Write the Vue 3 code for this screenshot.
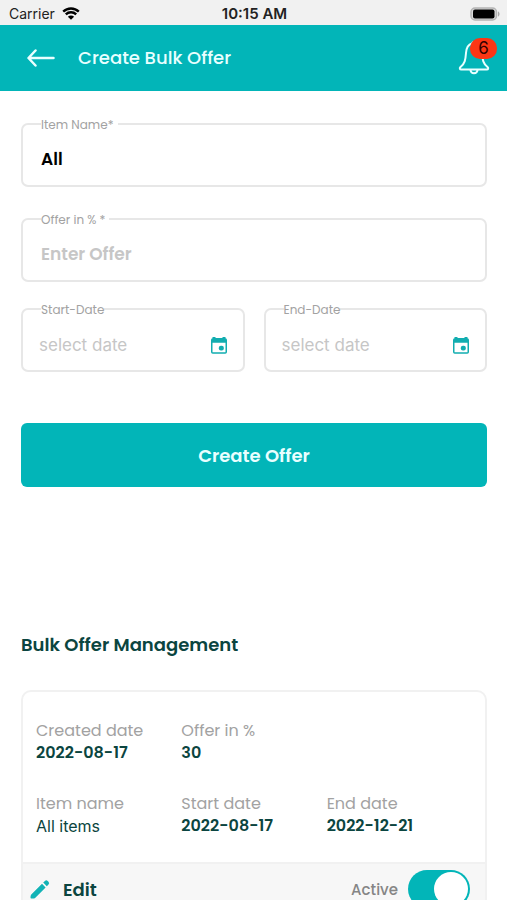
<template>
  <div class="screen">
    <div class="status-bar">
      <div class="carrier">
        <span>Carrier</span>
        <svg class="wifi" viewBox="0 0 18 13" aria-hidden="true">
          <path d="M1.2 4.6a11.2 11.2 0 0 1 15.6 0" />
          <path d="M3.8 7.3a7.5 7.5 0 0 1 10.4 0" />
          <path class="dot" d="M9 12.8 5.9 9.7a4.4 4.4 0 0 1 6.2 0z" />
        </svg>
      </div>
      <span class="clock">10:15 AM</span>
      <svg class="battery" viewBox="0 0 30 14" aria-hidden="true">
        <rect x="1" y="1" width="25.5" height="12" rx="4" fill="#d9d9d9" stroke="#b4b4b4" stroke-width="1.5" />
        <rect x="3" y="2.5" width="21.5" height="9" rx="2" fill="#000" />
        <path d="M28 4.5c2 .6 2 4.4 0 5z" fill="#a9a9a9" />
      </svg>
    </div>

    <header class="header">
      <button class="icon-btn" type="button" aria-label="Back">
        <svg class="back" viewBox="0 0 28 20">
          <path d="M26.5 10H1.8M8.5 2.5 1.5 10l7 7.500" />
        </svg>
      </button>
      <h1 class="header-title">Create Bulk Offer</h1>
      <button class="icon-btn bell-btn" type="button" aria-label="Notifications">
        <svg class="bell" viewBox="0 0 32 34">
          <path d="M14 2.5c-4.5 1.2-5.7 5-6 9.5-.5 7-1.2 10.500-5.5 14-1.2 1.200-.8 2.600.8 2.600h25.400c1.600 0 2-1.400.8-2.600-4.300-3.500-5-7-5.500-14-.3-4.500-1.500-8.300-6-9.500-.6-2-3.400-2-4 0z" />
          <path d="M12.500 29c.3 4.300 6.700 4.300 7 0" />
        </svg>
        <span class="badge">{{ notifications }}</span>
      </button>
    </header>

    <main class="content">
      <form class="form" @submit.prevent>
        <div class="field">
          <label for="item-name">Item Name*</label>
          <input id="item-name" v-model="itemName" type="text" />
        </div>
        <div class="field">
          <label for="offer">Offer in % *</label>
          <input id="offer" v-model="offer" type="text" placeholder="Enter Offer" />
        </div>
        <div class="date-row">
          <div v-for="date in dates" :key="date.id" class="field date-field">
            <label :for="date.id">{{ date.label }}</label>
            <input :id="date.id" v-model="date.value" type="text" placeholder="select date" />
            <button class="icon-btn" type="button" :aria-label="date.label">
              <svg class="calendar" viewBox="0 0 16 17">
                <path fill-rule="evenodd" d="M1.500 0h3v1h7V0h3v1.200A1.800 1.800 0 0 1 16 3v12a1.800 1.800 0 0 1-1.800 1.800H1.800A1.800 1.800 0 0 1 0 15V3a1.800 1.800 0 0 1 1.500-1.800zM1.500 5.800V15.200h13V5.800z" />
                <rect x="7.800" y="8.800" width="5" height="4.800" rx="2" />
              </svg>
            </button>
          </div>
        </div>
        <button class="submit-btn" type="submit">Create Offer</button>
      </form>

      <h2 class="section-title">Bulk Offer Management</h2>

      <section class="card">
        <dl class="details">
          <div v-for="item in details" :key="item.label" :class="['detail', { wide: item.wide }]">
            <dt>{{ item.label }}</dt>
            <dd :class="{ plain: item.plain }">{{ item.value }}</dd>
          </div>
        </dl>
        <div class="card-footer">
          <button class="edit-btn" type="button">
            <svg class="pencil" viewBox="0 0 20 20">
              <path d="M1.5 15.3 12 4.8l3.600 3.600L5.100 18.900c-1 .9-4.600.9-4.600-.2 0-1.200 0-2.400 1-3.400zM13.200 3.600l1.700-1.700a2 2 0 0 1 2.800 0l.8.8a2 2 0 0 1 0 2.800l-1.700 1.700z" />
            </svg>
            Edit
          </button>
          <label class="toggle">
            <span>Active</span>
            <input v-model="active" type="checkbox" role="switch" />
          </label>
        </div>
      </section>
    </main>
  </div>
</template>

<script setup>
import { ref } from 'vue'

const notifications = ref(6)
const itemName = ref('All')
const offer = ref('')
const active = ref(true)

const dates = ref([
  { id: 'start-date', label: 'Start-Date', value: '' },
  { id: 'end-date', label: 'End-Date', value: '' }
])

const details = [
  { label: 'Created date', value: '2022-08-17' },
  { label: 'Offer in %', value: '30', wide: true },
  { label: 'Item name', value: 'All items', plain: true },
  { label: 'Start date', value: '2022-08-17' },
  { label: 'End date', value: '2022-12-21' }
]
</script>

<style>
body {
  margin: 0;
  background: #fff;
}
</style>

<style scoped>
.screen {
  min-height: 100vh;
  font-family: Poppins, Inter, "Liberation Sans", sans-serif;
  color: #0b4540;
}

.screen * {
  box-sizing: border-box;
}

button,
input {
  font-family: inherit;
  margin: 0;
}

button {
  cursor: pointer;
}

.status-bar {
  display: grid;
  grid-template-columns: 1fr auto 1fr;
  align-items: center;
  height: 25px;
  padding: 2px 7px 0 9px;
  background: #f1f1f1;
  color: #222;
  font-family: Inter, sans-serif;
  font-size: 14px;
}

.carrier {
  display: flex;
  align-items: center;
  gap: 7px;
}

.wifi {
  width: 18px;
  height: 13px;
  fill: none;
  stroke: #000;
  stroke-width: 2.4;
}

.wifi .dot {
  fill: #000;
  stroke: none;
}

.clock {
  font-size: 15px;
  font-weight: 600;
}

.battery {
  width: 30px;
  height: 14px;
  justify-self: end;
}

.header {
  display: flex;
  align-items: center;
  height: 66px;
  padding: 0 16px 0 27px;
  background: #02b5b8;
}

.header-title {
  flex: 1;
  margin: 0 0 0 23px;
  color: #e9ffff;
  font-size: 18px;
  font-weight: 500;
  line-height: 24px;
}

.icon-btn {
  display: flex;
  padding: 0;
  border: 0;
  background: none;
}

.back {
  width: 28px;
  height: 20px;
  fill: none;
  stroke: #e9ffff;
  stroke-width: 2.5;
  stroke-linecap: round;
  stroke-linejoin: round;
}

.bell-btn {
  position: relative;
}

.bell {
  width: 34px;
  height: 34px;
  fill: none;
  stroke: #e9ffff;
  stroke-width: 2;
}

.badge {
  position: absolute;
  top: -3px;
  right: -6px;
  width: 27px;
  height: 21px;
  border-radius: 10px;
  background: #fc3615;
  color: #300;
  font-family: Inter, sans-serif;
  font-size: 17px;
  line-height: 21px;
  text-align: center;
}

.content {
  padding: 32px 20px 32px 21px;
}

.form {
  display: flex;
  flex-direction: column;
}

.field {
  position: relative;
  display: flex;
  align-items: center;
  height: 64px;
  margin-bottom: 31px;
  padding: 8px 18px 0;
  border: 2px solid #e7e7e7;
  border-radius: 7px;
}

.field label {
  position: absolute;
  top: -8px;
  left: 18px;
  padding-right: 4px;
  background: #fff;
  color: #a2a2a2;
  font-size: 12px;
  line-height: 16px;
}

.field input {
  flex: 1;
  width: 100%;
  min-width: 0;
  padding: 0;
  border: 0;
  outline: 0;
  background: none;
  color: #000;
  font-size: 17px;
  font-weight: 600;
  line-height: 24px;
}

.field input::placeholder {
  color: #c6c6c6;
  opacity: 1;
}

.date-row {
  display: grid;
  grid-template-columns: 1fr 1fr;
  gap: 19px;
  margin-top: -5px;
}

.date-row .date-field {
  margin-bottom: 51px;
  padding: 10px 16px 0;
}

.date-row .date-field label {
  padding-right: 0;
}

.date-row .date-field input {
  font-family: Inter, sans-serif;
  font-size: 17px;
  font-weight: 400;
}

.calendar {
  width: 16px;
  height: 17px;
  fill: #12adb0;
}

.submit-btn {
  height: 64px;
  border: 0;
  border-radius: 6px;
  background: #02b5b8;
  color: #e9ffff;
  font-size: 18px;
  font-weight: 600;
}

.section-title {
  margin: 146px 0 33px;
  font-size: 18px;
  font-weight: 600;
  line-height: 24px;
}

.card {
  overflow: hidden;
  border: 2px solid #f1f1f1;
  border-radius: 10px;
}

.details {
  display: grid;
  grid-template-columns: repeat(3, 1fr);
  row-gap: 29px;
  margin: 0;
  padding: 28px 13px 25px;
}

.detail.wide {
  grid-column: span 2;
}

.detail dt {
  color: #a2a2a2;
  font-size: 16px;
  line-height: 22px;
}

.detail dd {
  margin: 0;
  font-size: 16px;
  font-weight: 600;
  line-height: 22px;
}

.detail .plain {
  font-family: Inter, sans-serif;
  font-weight: 400;
}

.card-footer {
  display: flex;
  align-items: center;
  justify-content: space-between;
  padding: 6px 15px 6px 7px;
  border-top: 2px solid #f1f1f1;
  background: #f7f7f7;
}

.edit-btn {
  display: flex;
  align-items: center;
  gap: 13px;
  padding: 0;
  border: 0;
  background: none;
  color: #0b4540;
  font-size: 18px;
  font-weight: 600;
}

.pencil {
  width: 20px;
  height: 20px;
  fill: #12b3b6;
}

.toggle {
  display: flex;
  align-items: center;
  gap: 10px;
  color: #858585;
  font-size: 15px;
  font-weight: 500;
}

.toggle input {
  display: flex;
  align-items: center;
  width: 62px;
  height: 38px;
  margin: 0;
  padding: 2px;
  border-radius: 19px;
  background: #c6c6c6;
  appearance: none;
  cursor: pointer;
}

.toggle input::before {
  content: "";
  width: 34px;
  height: 34px;
  border-radius: 50%;
  background: #fff;
}

.toggle input:checked {
  justify-content: flex-end;
  background: #02b5b8;
}
</style>
